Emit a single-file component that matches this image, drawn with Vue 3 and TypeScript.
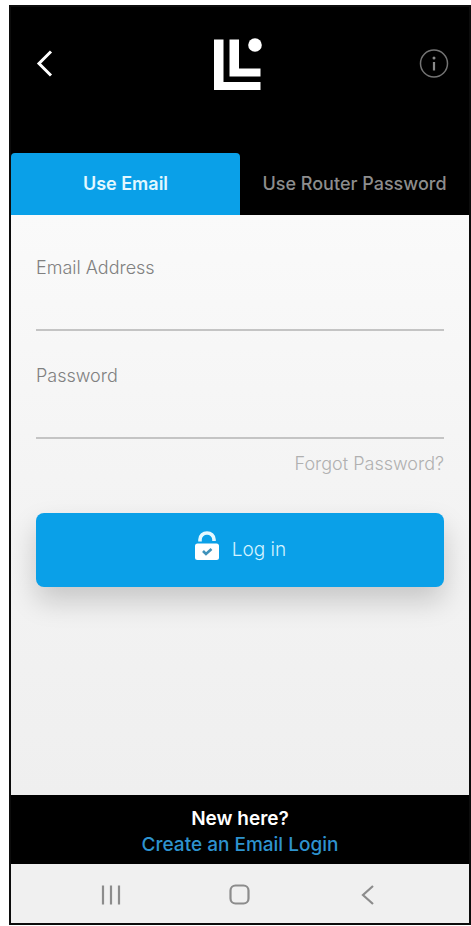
<script setup lang="ts">
import { ref } from 'vue'

type Mode = 'email' | 'router'

const mode = ref<Mode>('email')
const email = ref('')
const password = ref('')
</script>

<template>
  <div class="phone">
    <header class="top">
      <button class="icon-button back" type="button" aria-label="Back">
        <svg width="18" height="28" viewBox="0 0 18 28">
          <path d="M16 1.500 L4 13.500 L16 25.500" fill="none" stroke="#fff" stroke-width="3" />
        </svg>
      </button>
      <svg class="logo" width="48" height="52" viewBox="0 0 48 52" role="img" aria-label="Linksys">
        <path d="M0 1.500H9.500V44H46.500V52H0Z" fill="#fff" />
        <path d="M15.500 1.500H25V30.500H46.500V38.500H15.500Z" fill="#fff" />
        <circle cx="41" cy="7" r="6.800" fill="#fff" />
      </svg>
      <button class="icon-button info" type="button" aria-label="Information">
        <svg width="30" height="30" viewBox="0 0 30 30">
          <circle cx="15" cy="14.500" r="13.500" fill="none" stroke="#747474" stroke-width="1.500" />
          <circle cx="15" cy="9" r="1.500" fill="#8a8a8a" />
          <path d="M15 13V21.500" stroke="#8a8a8a" stroke-width="2.200" />
        </svg>
      </button>
    </header>

    <nav class="tabs">
      <button type="button" :class="{ active: mode === 'email' }" @click="mode = 'email'">Use Email</button>
      <button type="button" :class="{ active: mode === 'router' }" @click="mode = 'router'">Use Router Password</button>
    </nav>

    <main class="content">
      <form @submit.prevent>
        <div class="field">
          <label for="email">Email Address</label>
          <input id="email" v-model="email" type="email" />
        </div>
        <div class="field">
          <label for="password">Password</label>
          <input id="password" v-model="password" type="password" />
        </div>
        <a class="forgot" href="#">Forgot Password?</a>
        <button class="login" type="submit">
          <svg width="26" height="30" viewBox="0 0 26 30">
            <path d="M6 10.500V8.500A7 6.500 0 0 1 20 8.500V10" fill="none" stroke="#e4f8ff" stroke-width="3.600" />
            <rect x="1" y="12.500" width="24" height="16.500" rx="2.500" fill="#fff" />
            <path d="M9 20L12 23L17.500 18" fill="none" stroke="#3f92bb" stroke-width="2.600" />
          </svg>
          <span>Log in</span>
        </button>
      </form>
    </main>

    <footer class="signup">
      <p>New here?</p>
      <a href="#">Create an Email Login</a>
    </footer>

    <nav class="system">
      <button type="button" aria-label="Recent apps">
        <svg width="22" height="22" viewBox="0 0 22 22">
          <path d="M3 1.500V20.500M11 1.500V20.500M19 1.500V20.500" stroke="#8c8c8c" stroke-width="2.200" />
        </svg>
      </button>
      <button type="button" aria-label="Home">
        <svg width="22" height="22" viewBox="0 0 22 22">
          <rect x="1.500" y="1.500" width="18" height="18" rx="5" fill="none" stroke="#8c8c8c" stroke-width="2.200" />
        </svg>
      </button>
      <button type="button" aria-label="Back">
        <svg width="22" height="22" viewBox="0 0 22 22">
          <path d="M15 2L5 11L15 20" fill="none" stroke="#8c8c8c" stroke-width="2.200" />
        </svg>
      </button>
    </nav>
  </div>
</template>

<style>
body {
  background: #fff;
}
</style>

<style scoped>
.phone {
  box-sizing: border-box;
  display: flex;
  flex-direction: column;
  min-height: calc(100vh - 6px);
  margin: 5px 0 0 9px;
  border: 2px solid #0c0c0c;
  background: #f0f0f0;
  font-family: Inter, "Liberation Sans", sans-serif;
  font-size: 18px;
  line-height: 26px;
}

button {
  padding: 0;
  border: 0;
  background: none;
  font: inherit;
  cursor: pointer;
}

svg {
  display: block;
}

a {
  text-decoration: none;
}

.top {
  display: grid;
  grid-template-columns: 1fr auto 1fr;
  align-items: center;
  padding: 31px 20px 63px 16px;
  background: #000;
}

.icon-button.back {
  justify-self: start;
  padding: 0 8px;
}

.info {
  justify-self: end;
}

.tabs {
  display: grid;
  grid-template-columns: 1fr 1fr;
  background: #000;
}

.tabs button {
  height: 62px;
  border-radius: 4px 4px 0 0;
  color: #8d8d8d;
  font-weight: 500;
  white-space: nowrap;
}

.tabs .active {
  background: #0aa0e8;
  color: #e2f8ff;
  font-weight: 600;
}

.content {
  flex: 1;
  padding: 40px 25px;
  background: linear-gradient(#fafafa, #f4f4f4 45%, #efefef);
}

form {
  display: flex;
  flex-direction: column;
}

.field {
  display: flex;
  flex-direction: column;
  margin-bottom: 32px;
}

.field label {
  color: #808080;
  font-weight: 300;
}

.field input {
  box-sizing: border-box;
  width: 100%;
  height: 50px;
  padding: 12px 0 4px;
  border: 0;
  border-bottom: 2px solid #c4c4c4;
  outline: 0;
  background: transparent;
  color: #333;
  font: inherit;
}

.forgot {
  align-self: flex-end;
  margin-top: -20px;
  color: #b0b0b0;
  font-weight: 300;
}

.login {
  display: flex;
  align-items: center;
  justify-content: center;
  gap: 12px;
  height: 74px;
  margin-top: 36px;
  border-radius: 8px;
  background: #0aa0e8;
  box-shadow: 0 14px 28px rgba(0, 0, 0, 0.18);
  color: #d4f3ff;
  font-size: 19px;
  font-weight: 300;
}

.login svg {
  margin-bottom: 8px;
}

.signup {
  padding: 11px 0 6px;
  background: #000;
  font-size: 19px;
  font-weight: 500;
  text-align: center;
}

.signup p {
  margin: 0;
  color: #fff;
  font-weight: 600;
}

.signup a {
  display: inline-block;
  color: #2e93cf;
}

.system {
  box-sizing: border-box;
  display: flex;
  justify-content: space-around;
  align-items: center;
  height: 59px;
  padding: 3px 36px 0;
  background: #f0f0f0;
}
</style>
